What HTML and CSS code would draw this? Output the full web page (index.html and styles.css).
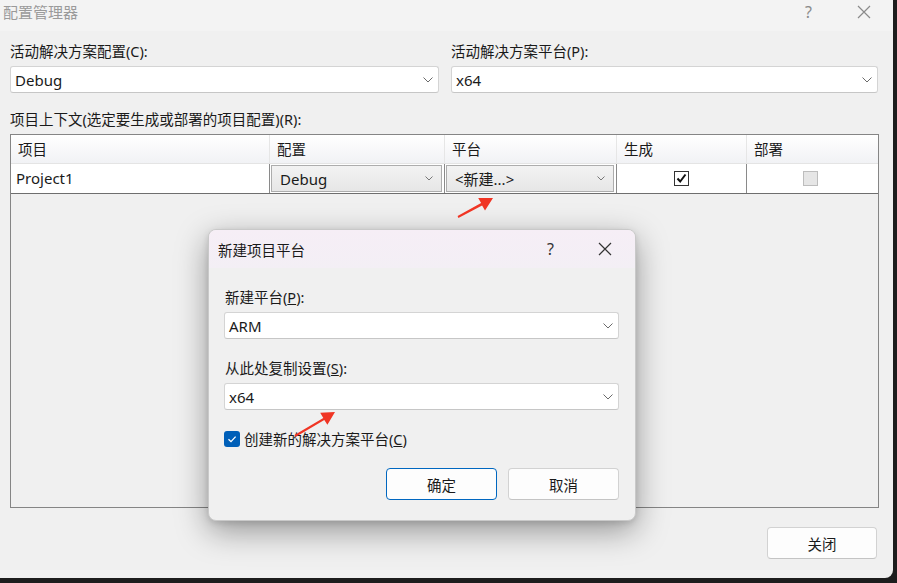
FILE: index.html
```html
<!DOCTYPE html>
<html lang="zh-CN">
<head>
<meta charset="utf-8">
<title>配置管理器</title>
<link rel="stylesheet" href="styles.css">
</head>
<body>
<div class="window">
  <div class="titlebar">
    <span class="title">配置管理器</span>
    <span class="tb-btns">
      <span class="help">?</span>
      <svg class="xicon" width="14" height="14" viewBox="0 0 14 14"><path d="M1 1L13 13M13 1L1 13" stroke="#8a8a8a" stroke-width="1.2" fill="none"/></svg>
    </span>
  </div>
  <div class="content">
    <div class="top-row">
      <div class="field">
        <div class="label">活动解决方案配置(C):</div>
        <div class="select"><span>Debug</span><svg class="chev" width="10" height="6" viewBox="0 0 10 6"><polyline points="0.5,0.5 5,5 9.5,0.5" fill="none" stroke="#6a6a6a" stroke-width="1"/></svg></div>
      </div>
      <div class="field">
        <div class="label">活动解决方案平台(P):</div>
        <div class="select"><span>x64</span><svg class="chev" width="10" height="6" viewBox="0 0 10 6"><polyline points="0.5,0.5 5,5 9.5,0.5" fill="none" stroke="#6a6a6a" stroke-width="1"/></svg></div>
      </div>
    </div>
    <div class="label ctx-label">项目上下文(选定要生成或部署的项目配置)(R):</div>
    <div class="grid">
      <div class="grid-head">
        <div class="hcell">项目</div>
        <div class="hcell">配置</div>
        <div class="hcell">平台</div>
        <div class="hcell">生成</div>
        <div class="hcell">部署</div>
      </div>
      <div class="grid-row">
        <div class="cell text-cell">Project1</div>
        <div class="cell combo-cell"><div class="combo"><span>Debug</span><svg class="chev" width="8" height="5" viewBox="0 0 8 5"><polyline points="0.5,0.5 4,4 7.5,0.5" fill="none" stroke="#777" stroke-width="1"/></svg></div></div>
        <div class="cell combo-cell"><div class="combo"><span>&lt;新建...&gt;</span><svg class="chev" width="8" height="5" viewBox="0 0 8 5"><polyline points="0.5,0.5 4,4 7.5,0.5" fill="none" stroke="#777" stroke-width="1"/></svg></div></div>
        <div class="cell check-cell"><span class="gcheck on"><svg width="13" height="13" viewBox="0 0 13 13"><path d="M2.5 6.5L5.2 9.5L10.5 2.5" fill="none" stroke="#111" stroke-width="2"/></svg></span></div>
        <div class="cell check-cell"><span class="gcheck off"></span></div>
      </div>
    </div>
    <div class="footer">
      <button class="btn close-btn">关闭</button>
    </div>
  </div>

  <div class="dialog">
    <div class="dlg-title">
      <span>新建项目平台</span>
      <span class="dlg-btns">
        <span class="dlg-help">?</span>
        <svg width="14" height="14" viewBox="0 0 14 14"><path d="M1 1L13 13M13 1L1 13" stroke="#333" stroke-width="1.2" fill="none"/></svg>
      </span>
    </div>
    <div class="dlg-body">
      <div class="label">新建平台(<u>P</u>):</div>
      <div class="select"><span>ARM</span><svg class="chev" width="10" height="6" viewBox="0 0 10 6"><polyline points="0.5,0.5 5,5 9.5,0.5" fill="none" stroke="#6a6a6a" stroke-width="1"/></svg></div>
      <div class="label second">从此处复制设置(<u>S</u>):</div>
      <div class="select"><span>x64</span><svg class="chev" width="10" height="6" viewBox="0 0 10 6"><polyline points="0.5,0.5 5,5 9.5,0.5" fill="none" stroke="#6a6a6a" stroke-width="1"/></svg></div>
      <div class="check-row">
        <span class="bcheck"><svg width="12" height="12" viewBox="0 0 12 12"><path d="M2.5 6.2L5 8.6L9.6 3.6" fill="none" stroke="#fff" stroke-width="1.3"/></svg></span>
        <span>创建新的解决方案平台(<u>C</u>)</span>
      </div>
      <div class="dlg-buttons">
        <button class="btn primary">确定</button>
        <button class="btn">取消</button>
      </div>
    </div>
  </div>

  <svg class="annot" width="893" height="578" viewBox="0 0 893 578">
    <polygon fill="#f03524" points="458.4,217.9 482.1,205.6 485.0,210.4 493,198 478.2,198.0 481.1,202.9 457.6,216.1"/>
    <polygon fill="#f03524" points="295.5,436.9 324.3,419.9 327.4,424.7 335,412 320.2,412.8 323.3,418.0 294.5,435.1"/>
  </svg>
</div>
</body>
</html>
```

FILE: styles.css
```css
html, body {
  margin: 0;
  padding: 0;
}
body {
  width: 897px;
  height: 583px;
  overflow: hidden;
  background: #1d1d1d;
  font-family: "Noto Sans", "Noto Sans CJK SC", sans-serif;
  color: #1a1a1a;
}
.window {
  position: relative;
  width: 893px;
  height: 578px;
  background: #f0f0f0;
  border-bottom-right-radius: 8px;
  display: flex;
  flex-direction: column;
}
.titlebar {
  height: 31px;
  box-sizing: border-box;
  background: #f3f3f3;
  display: flex;
  justify-content: space-between;
  align-items: flex-start;
  padding: 2px 22px 0 3px;
}
.title {
  font-size: 15px;
  line-height: 20px;
  color: #9a9a9a;
}
.tb-btns {
  display: flex;
  align-items: center;
  gap: 45px;
  height: 20px;
}
.help {
  font-size: 16px;
  color: #8a8a8a;
  line-height: 20px;
}
.content {
  flex: 1;
  display: flex;
  flex-direction: column;
  padding: 10px 14px 19px 10px;
}
.top-row {
  display: grid;
  grid-template-columns: 429px 427px;
  column-gap: 12px;
}
.label {
  font-size: 14.5px;
  line-height: 20px;
  margin-bottom: 5px;
  white-space: nowrap;
}
.select {
  height: 27px;
  box-sizing: border-box;
  background: #fff;
  border: 1px solid #d4d4d4;
  border-bottom-color: #c6c6c6;
  border-radius: 3px;
  display: flex;
  align-items: center;
  justify-content: space-between;
  padding: 0 5px 0 4px;
  font-size: 15px;
}
.ctx-label {
  margin-top: 16px;
}
.grid {
  height: 374px;
  box-sizing: border-box;
  border: 1px solid #858585;
  background: #f0f0f0;
  flex: none;
}
.grid-head, .grid-row {
  display: grid;
  grid-template-columns: 259px 175px 172px 130px 1fr;
}
.grid-head {
  height: 29px;
  box-sizing: border-box;
  border-bottom: 1px solid #e4e4e4;
  background: linear-gradient(#ffffff, #f1f2f5);
}
.hcell {
  font-size: 14.5px;
  line-height: 28px;
  padding-left: 7px;
  border-right: 1px solid #e6e6e6;
}
.hcell:last-child {
  border-right: none;
}
.grid-row {
  height: 30px;
  box-sizing: border-box;
  border-bottom: 1px solid #6e6e6e;
  background: #fff;
}
.cell {
  border-right: 1px solid #8a8a8a;
  box-sizing: border-box;
}
.cell:last-child {
  border-right: none;
}
.text-cell {
  font-size: 15px;
  line-height: 29px;
  padding-left: 5px;
}
.combo-cell {
  padding: 1px 2px 0 1px;
  background: #fff;
}
.combo {
  height: 27px;
  box-sizing: border-box;
  border: 1px solid #adadad;
  background: linear-gradient(#f3f3f3, #e6e6e6);
  display: flex;
  align-items: center;
  justify-content: space-between;
  padding: 0 8px 0 8px;
  font-size: 15px;
}
.check-cell {
  display: flex;
  align-items: center;
  justify-content: center;
}
.gcheck {
  width: 15px;
  height: 15px;
  box-sizing: border-box;
  display: flex;
  align-items: center;
  justify-content: center;
}
.gcheck.on {
  background: #fff;
  border: 1px solid #333;
}
.gcheck.off {
  background: #e6e6e6;
  border: 1px solid #bdbdbd;
  margin-left: -5px;
}
.footer {
  display: flex;
  justify-content: flex-end;
  margin-top: 19px;
  padding-right: 2px;
}
.btn {
  width: 111px;
  height: 32px;
  box-sizing: border-box;
  background: #fdfdfd;
  border: 1px solid #d2d2d2;
  border-bottom-color: #c4c4c4;
  border-radius: 4px;
  font-family: "Noto Sans", "Noto Sans CJK SC", sans-serif;
  font-size: 14.5px;
  color: #1a1a1a;
  padding: 0;
}
.close-btn {
  width: 110px;
}
.btn.primary {
  border: 1px solid #0067c0;
}

/* Overlay dialog */
.dialog {
  position: absolute;
  left: 208px;
  top: 229px;
  width: 428px;
  height: 292px;
  box-sizing: border-box;
  background: #f0f0f0;
  border: 1px solid #c9c9c9;
  border-radius: 8px;
  overflow: hidden;
  box-shadow: 0 10px 32px rgba(0, 0, 0, 0.38), 0 2px 6px rgba(0, 0, 0, 0.12);
  display: flex;
  flex-direction: column;
}
.dlg-title {
  height: 38px;
  flex: none;
  background: linear-gradient(#f6eef6, #f3eff5);
  display: flex;
  align-items: center;
  justify-content: space-between;
  padding: 0 23px 0 9px;
  font-size: 14.5px;
}
.dlg-btns {
  display: flex;
  align-items: center;
  gap: 44px;
}
.dlg-help {
  font-size: 16px;
  color: #333;
}
.dlg-body {
  padding: 19px 16px 20px 15px;
  display: flex;
  flex-direction: column;
}
.dlg-body .label {
  padding-left: 1px;
}
.dlg-body .label.second {
  margin-top: 19px;
}
.check-row {
  display: flex;
  align-items: center;
  gap: 4px;
  margin-top: 19px;
  font-size: 14.5px;
  line-height: 20px;
}
.bcheck {
  width: 16px;
  height: 16px;
  border-radius: 3px;
  background: #005fb8;
  display: flex;
  align-items: center;
  justify-content: center;
}
.dlg-buttons {
  display: flex;
  justify-content: flex-end;
  gap: 11px;
  margin-top: 19px;
}
.annot {
  position: absolute;
  left: 0;
  top: 0;
  pointer-events: none;
}
```
